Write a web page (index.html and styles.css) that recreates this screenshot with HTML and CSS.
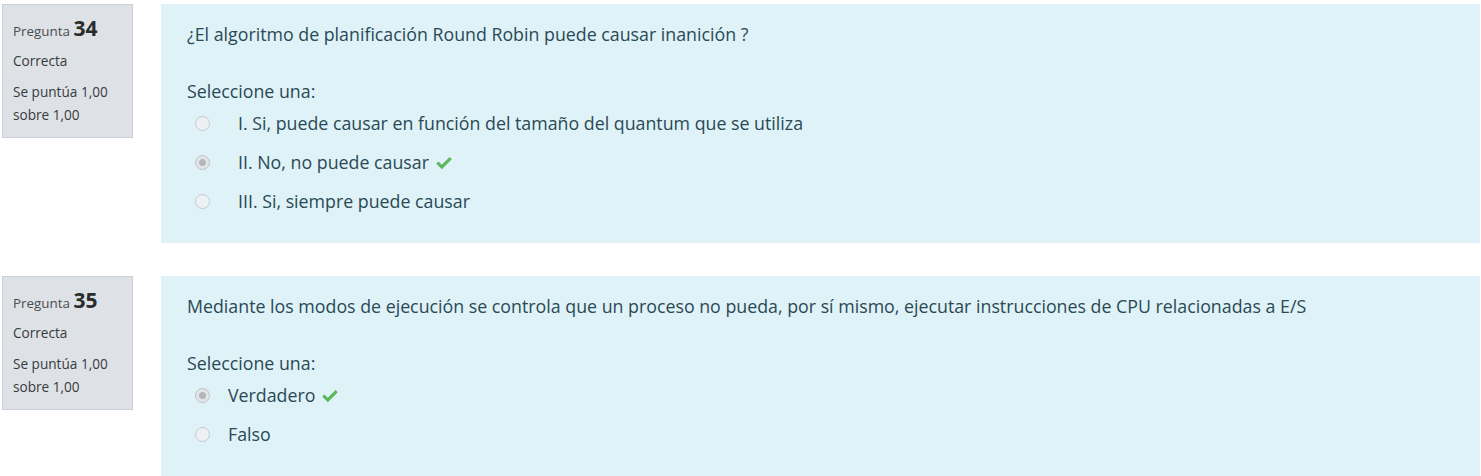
FILE: index.html
```html
<!DOCTYPE html>
<html lang="es">
<head>
<meta charset="utf-8">
<title>Revisión del intento</title>
<link rel="stylesheet" href="styles.css">
</head>
<body>
<div class="que">
  <div class="info">
    <h3 class="no">Pregunta <span class="qno">34</span></h3>
    <div class="state">Correcta</div>
    <div class="grade">Se puntúa 1,00 sobre 1,00</div>
  </div>
  <div class="formulation">
    <div class="qtext">¿El algoritmo de planificación Round Robin puede causar inanición ?</div>
    <div class="prompt">Seleccione una:</div>
    <div class="answer">
      <div class="opt"><span class="radio"></span><span class="lbl num">I. Si, puede causar en función del tamaño del quantum que se utiliza</span></div>
      <div class="opt"><span class="radio checked"></span><span class="lbl num">II. No, no puede causar <svg class="ok" viewBox="0 0 18 14" width="18" height="14"><path d="M1.2 7.6 L3.4 5.4 L6.8 8.8 L14.6 1 L16.8 3.2 L6.8 13.2 Z" fill="#5cb85c"/></svg></span></div>
      <div class="opt"><span class="radio"></span><span class="lbl num">III. Si, siempre puede causar</span></div>
    </div>
  </div>
</div>
<div class="que">
  <div class="info">
    <h3 class="no">Pregunta <span class="qno">35</span></h3>
    <div class="state">Correcta</div>
    <div class="grade">Se puntúa 1,00 sobre 1,00</div>
  </div>
  <div class="formulation">
    <div class="qtext">Mediante los modos de ejecución se controla que un proceso no pueda, por sí mismo, ejecutar instrucciones de CPU relacionadas a E/S</div>
    <div class="prompt">Seleccione una:</div>
    <div class="answer">
      <div class="opt"><span class="radio checked"></span><span class="lbl">Verdadero <svg class="ok" viewBox="0 0 18 14" width="18" height="14"><path d="M1.2 7.6 L3.4 5.4 L6.8 8.8 L14.6 1 L16.8 3.2 L6.8 13.2 Z" fill="#5cb85c"/></svg></span></div>
      <div class="opt"><span class="radio"></span><span class="lbl">Falso</span></div>
    </div>
  </div>
</div>
</body>
</html>
```

FILE: styles.css
```css
html, body {
  margin: 0;
  padding: 0;
  background: #ffffff;
}
body {
  font-family: "Open Sans", "Noto Sans", sans-serif;
  padding: 4px 1px 0 2px;
}
.que {
  display: flex;
  align-items: flex-start;
  gap: 28px;
  margin-bottom: 33px;
}
.info {
  box-sizing: border-box;
  width: 131px;
  flex: none;
  background: #dee2e6;
  border: 1px solid #cad0d7;
  padding: 6px 10px 11px 10px;
  color: #373a3c;
  font-size: 13.6px;
  line-height: 23px;
}
.no {
  margin: 0;
  font-weight: 400;
  font-size: 13.4px;
  line-height: 34px;
  color: #4a4d50;
}
.qno {
  font-size: 21px;
  font-weight: 700;
  color: #2a2c2e;
}
.state {
  margin-top: 1px;
  margin-bottom: 8px;
}
.grade {
  width: 108px;
}
.formulation {
  flex: 1;
  background: #def2f8;
  color: #2a4954;
  padding: 18px 26px 22px 26px;
  font-size: 17.8px;
  line-height: 25px;
  min-height: 199px;
}
.qtext {
  margin-bottom: 32px;
}
.opt {
  display: flex;
  align-items: center;
  height: 39px;
}
.radio {
  box-sizing: border-box;
  width: 15px;
  height: 15px;
  border-radius: 50%;
  border: 1px solid #c5cacf;
  background: #eef1f3;
  margin-left: 8px;
  flex: none;
  display: flex;
  align-items: center;
  justify-content: center;
}
.radio.checked {
  background: #e2e5e8;
  border-color: #bfc3c7;
}
.radio.checked::after {
  content: "";
  width: 7px;
  height: 7px;
  border-radius: 50%;
  background: #b3b7bb;
}
.lbl {
  margin-left: 18px;
}
.lbl.num {
  margin-left: 28px;
}
.ok {
  vertical-align: -1px;
  margin-left: 1px;
}
```
